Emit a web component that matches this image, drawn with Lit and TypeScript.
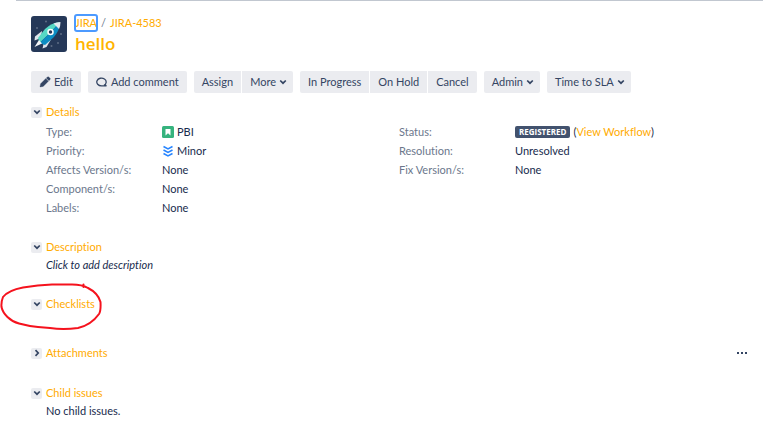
import { LitElement, html, css, svg, nothing } from "lit";
import { customElement, property } from "lit/decorators.js";

const chevron = svg`<path d="M1.200 2.500 4 5.200 6.800 2.500" fill="none" stroke="currentColor" stroke-width="1.700"/>`;

@customElement("issue-section")
class IssueSection extends LitElement {
  @property() heading = "";
  @property({ type: Boolean }) collapsed = false;
  static styles = css`
    :host { display: block; position: relative; }
    header { display: flex; align-items: center; height: 18px; gap: 4px; }
    button { display: grid; place-items: center; width: 11px; height: 11px; padding: 0; border: 0; border-radius: 2px; background: #ebecf0; color: #344563; }
    svg { width: 8px; height: 8px; }
    .collapsed svg { transform: rotate(-90deg); }
    h2 { flex: 1; margin: 0; font-size: 11px; line-height: 18px; font-weight: 400; color: #ffab00; }
    .body { padding-left: 15px; }
  `;
  render() {
    return html`
      <header class=${this.collapsed ? "collapsed" : ""}>
        <button aria-label="Toggle ${this.heading}" aria-expanded=${this.collapsed ? "false" : "true"}
          @click=${() => (this.collapsed = !this.collapsed)}>
          <svg viewBox="0 0 8 8">${chevron}</svg>
        </button>
        <h2>${this.heading}</h2>
        <slot name="actions"></slot>
      </header>
      ${this.collapsed ? nothing : html`<div class="body"><slot></slot></div>`}
      <slot name="overlay"></slot>
    `;
  }
}

const pencil = html`<svg class="icon" viewBox="0 0 12 12"><path d="M1 11 1.600 7.800 6.800 2.600 9.400 5.200 4.200 10.400z M7.300 2.100 8.500.9Q9.100.4 9.700.9L11.100 2.300Q11.600 2.900 11.100 3.500L9.900 4.700z" fill="currentColor" stroke="currentColor" stroke-width=".3"/></svg>`;
const bubble = html`<svg class="icon" viewBox="0 0 12 12"><path d="M8 9.300A4.700 3.900 0 1 0 5.500 9.900H10.500Q9.300 9.500 9.300 8.300" fill="none" stroke="currentColor" stroke-width="1.300"/></svg>`;

@customElement("app-root")
class AppRoot extends LitElement {
  static styles = css`
    :host { display: block; padding-left: 16px; background: #fff; color: #172b4d; font: 11px/18px Lato, "Open Sans", sans-serif; font-variant-ligatures: none; }
    a { color: #ffab00; text-decoration: none; }
    main { border-top: 1px solid #c1c7d0; padding: 14px 11px 12px 15px; }
    .head { display: flex; gap: 8px; }
    .avatar { width: 36px; height: 36px; margin-top: 1px; }
    .crumbs { display: flex; gap: 4px; height: 16px; line-height: 16px; color: #6b778c; }
    .crumbs a:first-child { outline: 2px solid #4c9aff; outline-offset: -1px; border-radius: 2px; }
    h1 { margin: 0; font: 600 17px/26px "Open Sans", sans-serif; color: #ffb400; }
    .bar { display: flex; gap: 7px; margin: 14px 0 10px; }
    .group { display: flex; gap: 1px; }
    .bar button { display: flex; align-items: center; gap: 3px; height: 22px; padding: 0 8px; border: 0; background: #ebecf0; color: #344563; font: inherit; white-space: nowrap; }
    .bar button.menu { padding: 0 6px 0 8px; }
    .group button:first-child { border-radius: 2px 0 0 2px; }
    .group button:last-child { border-radius: 0 2px 2px 0; }
    .group button:only-child { border-radius: 2px; }
    .icon { width: 12px; height: 12px; }
    .caret { width: 8px; height: 8px; }
    .fields { display: grid; grid-template-columns: 1fr 1fr; padding-top: 1px; }
    dl { margin: 0; display: grid; grid-template-columns: 116px 1fr; grid-auto-rows: 19px; align-content: start; align-items: center; }
    dt { color: #6b778c; }
    dd { margin: 0; display: flex; align-items: center; gap: 3px; }
    .lozenge { height: 12px; padding: 0 4px; border-radius: 2px; background: #42526e; color: #fff; font: 700 8px/12px "Open Sans", sans-serif; }
    .details { margin-bottom: 21px; }
    .desc { margin-bottom: 21px; }
    .check { margin-bottom: 31px; }
    .attach { margin-bottom: 22px; }
    .dots { display: flex; margin-right: 5px; padding: 0; border: 0; background: none; color: #344563; }
    .dots svg { width: 10px; height: 10px; }
    p { margin: 0; }
    .ring { position: absolute; left: -31px; top: -12px; width: 104px; height: 48px; pointer-events: none; }
  `;

  button(label: string, icon: unknown = nothing, menu = false) {
    return html`<button class=${menu ? "menu" : ""}>${icon}${label}${menu ? html`<svg class="caret" viewBox="0 0 8 8">${chevron}</svg>` : nothing}</button>`;
  }

  render() {
    return html`<main>
      <div class="head">
        <svg class="avatar" viewBox="0 0 36 36">
          <rect width="36" height="36" rx="3" fill="#253858"/>
          <g fill="#5e6c84"><circle cx="15" cy="5.500" r="1"/><circle cx="6" cy="12" r="1"/><circle cx="30" cy="18" r="1"/><circle cx="27" cy="27" r="1"/><circle cx="20.500" cy="30" r="1"/></g>
          <path d="M11 15 4 20.500 3.500 24.500 10 22z" fill="#dfe5ec"/>
          <path d="M20 23.500 15.500 31 11.500 32.500 13 26z" fill="#dfe5ec"/>
          <path d="M7 22 14 13Q20 7 29 6L19 17 8.500 27z" fill="#57d9c5"/>
          <path d="M29 6Q29 14 23 21L14 29 8.500 27 19 17z" fill="#0c8dc3"/>
          <path d="M8 24 3.500 31 11 27.500z" fill="#f4f5f7"/>
          <path d="M22.500 7.500Q26 6 29.500 6 29.500 10 28 13z" fill="#e6eaf0"/>
          <circle cx="19.500" cy="16" r="2.500" fill="#253858" stroke="#fff" stroke-width="1.500"/>
        </svg>
        <div>
          <nav class="crumbs"><a href="#jira">JIRA</a><span>/</span><a href="#issue">JIRA-4583</a></nav>
          <h1>hello</h1>
        </div>
      </div>
      <div class="bar">
        <div class="group">${this.button("Edit", pencil)}</div>
        <div class="group">${this.button("Add comment", bubble)}</div>
        <div class="group">${this.button("Assign")}${this.button("More", nothing, true)}</div>
        <div class="group">${this.button("In Progress")}${this.button("On Hold")}${this.button("Cancel")}</div>
        <div class="group">${this.button("Admin", nothing, true)}</div>
        <div class="group">${this.button("Time to SLA", nothing, true)}</div>
      </div>
      <issue-section class="details" heading="Details">
        <div class="fields">
          <dl>
            <dt>Type:</dt>
            <dd><svg class="icon" viewBox="0 0 12 12"><rect width="12" height="12" rx="1.500" fill="#36b37e"/><path d="M3.500 3h5v6.500L6 7.300 3.500 9.500z" fill="#fff"/></svg>PBI</dd>
            <dt>Priority:</dt>
            <dd><svg class="icon" viewBox="0 0 12 12"><path d="M1.500 1.500 6 4l4.500-2.500M1.500 5 6 7.500 10.500 5M1.500 8.500 6 11l4.500-2.500" fill="none" stroke="#2684ff" stroke-width="1.500"/></svg>Minor</dd>
            <dt>Affects Version/s:</dt><dd>None</dd>
            <dt>Component/s:</dt><dd>None</dd>
            <dt>Labels:</dt><dd>None</dd>
          </dl>
          <dl>
            <dt>Status:</dt>
            <dd><span class="lozenge">REGISTERED</span><span>(<a href="#workflow">View Workflow</a>)</span></dd>
            <dt>Resolution:</dt><dd>Unresolved</dd>
            <dt>Fix Version/s:</dt><dd>None</dd>
          </dl>
        </div>
      </issue-section>
      <issue-section class="desc" heading="Description"><p><em>Click to add description</em></p></issue-section>
      <issue-section class="check" heading="Checklists">
        <svg slot="overlay" class="ring" viewBox="0 283 104 48" fill="none" stroke="#f5121d" stroke-width="2" stroke-linecap="round">
          <path d="M83.500 284.500V287M88 288Q82 284.500 72 284.500H52Q38 285 23 287.500C15 289 7 292 3 297Q1 302 1.500 307C3 314 10 321 19 323.500Q28 326 38 327L50 328Q63 330 78 328C87 326 94 321 99 314Q101 311 100.500 302 98 293 88 288"/>
        </svg>
      </issue-section>
      <issue-section class="attach" heading="Attachments" collapsed>
        <button slot="actions" class="dots" aria-label="Attachment options"><svg viewBox="0 0 10 10" fill="currentColor"><path d="M0 4h2v2H0zM4 4h2v2H4zM8 4h2v2H8z"/></svg></button>
      </issue-section>
      <issue-section heading="Child issues"><p>No child issues.</p></issue-section>
    </main>`;
  }
}
